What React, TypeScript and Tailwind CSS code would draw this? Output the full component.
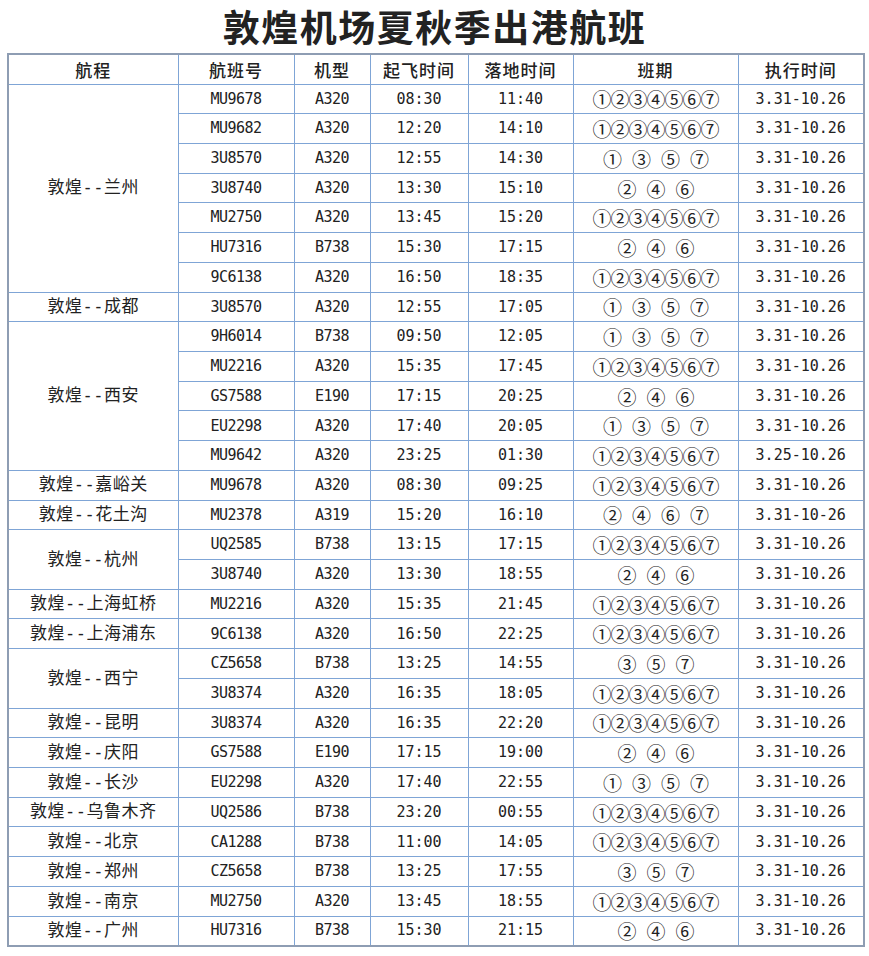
import React from 'react';

type Flight = {
  no: string;
  plane: string;
  dep: string;
  arr: string;
  days: string;
  period?: string;
};

type Route = { city: string; flights: Flight[] };

const FULL = '1234567';

const routes: Route[] = [
  {
    city: '兰州',
    flights: [
      { no: 'MU9678', plane: 'A320', dep: '08:30', arr: '11:40', days: FULL },
      { no: 'MU9682', plane: 'A320', dep: '12:20', arr: '14:10', days: FULL },
      { no: '3U8570', plane: 'A320', dep: '12:55', arr: '14:30', days: '1357' },
      { no: '3U8740', plane: 'A320', dep: '13:30', arr: '15:10', days: '246' },
      { no: 'MU2750', plane: 'A320', dep: '13:45', arr: '15:20', days: FULL },
      { no: 'HU7316', plane: 'B738', dep: '15:30', arr: '17:15', days: '246' },
      { no: '9C6138', plane: 'A320', dep: '16:50', arr: '18:35', days: FULL },
    ],
  },
  { city: '成都', flights: [{ no: '3U8570', plane: 'A320', dep: '12:55', arr: '17:05', days: '1357' }] },
  {
    city: '西安',
    flights: [
      { no: '9H6014', plane: 'B738', dep: '09:50', arr: '12:05', days: '1357' },
      { no: 'MU2216', plane: 'A320', dep: '15:35', arr: '17:45', days: FULL },
      { no: 'GS7588', plane: 'E190', dep: '17:15', arr: '20:25', days: '246' },
      { no: 'EU2298', plane: 'A320', dep: '17:40', arr: '20:05', days: '1357' },
      { no: 'MU9642', plane: 'A320', dep: '23:25', arr: '01:30', days: FULL, period: '3.25-10.26' },
    ],
  },
  { city: '嘉峪关', flights: [{ no: 'MU9678', plane: 'A320', dep: '08:30', arr: '09:25', days: FULL }] },
  { city: '花土沟', flights: [{ no: 'MU2378', plane: 'A319', dep: '15:20', arr: '16:10', days: '2467', period: '3.31-10-26' }] },
  {
    city: '杭州',
    flights: [
      { no: 'UQ2585', plane: 'B738', dep: '13:15', arr: '17:15', days: FULL },
      { no: '3U8740', plane: 'A320', dep: '13:30', arr: '18:55', days: '246' },
    ],
  },
  { city: '上海虹桥', flights: [{ no: 'MU2216', plane: 'A320', dep: '15:35', arr: '21:45', days: FULL }] },
  { city: '上海浦东', flights: [{ no: '9C6138', plane: 'A320', dep: '16:50', arr: '22:25', days: FULL }] },
  {
    city: '西宁',
    flights: [
      { no: 'CZ5658', plane: 'B738', dep: '13:25', arr: '14:55', days: '357' },
      { no: '3U8374', plane: 'A320', dep: '16:35', arr: '18:05', days: FULL },
    ],
  },
  { city: '昆明', flights: [{ no: '3U8374', plane: 'A320', dep: '16:35', arr: '22:20', days: FULL }] },
  { city: '庆阳', flights: [{ no: 'GS7588', plane: 'E190', dep: '17:15', arr: '19:00', days: '246' }] },
  { city: '长沙', flights: [{ no: 'EU2298', plane: 'A320', dep: '17:40', arr: '22:55', days: '1357' }] },
  { city: '乌鲁木齐', flights: [{ no: 'UQ2586', plane: 'B738', dep: '23:20', arr: '00:55', days: FULL }] },
  { city: '北京', flights: [{ no: 'CA1288', plane: 'B738', dep: '11:00', arr: '14:05', days: FULL }] },
  { city: '郑州', flights: [{ no: 'CZ5658', plane: 'B738', dep: '13:25', arr: '17:55', days: '357' }] },
  { city: '南京', flights: [{ no: 'MU2750', plane: 'A320', dep: '13:45', arr: '18:55', days: FULL }] },
  { city: '广州', flights: [{ no: 'HU7316', plane: 'B738', dep: '15:30', arr: '21:15', days: '246' }] },
];

const circled = ['①', '②', '③', '④', '⑤', '⑥', '⑦'];

const Days: React.FC<{ days: string }> = ({ days }) => {
  const full = days === FULL;
  return (
    <div className={`flex justify-center ${full ? 'gap-0' : 'gap-[11px]'}`}>
      {days.split('').map((d) => (
        <span key={d} className="w-[18px] text-center text-[19px] leading-none">
          {circled[Number(d) - 1]}
        </span>
      ))}
    </div>
  );
};

const cell = 'border border-[#7fa5d6] text-center align-middle p-0';
const mono = "[font-family:'DejaVu_Sans_Mono','Noto_Sans_CJK_SC',monospace] text-[15px]";

export default function App() {
  return (
    <div className="min-h-[956px] bg-white text-[#222] [font-family:'Noto_Sans_CJK_SC',sans-serif]">
      <h1 className="h-[53px] text-center text-[37px] font-bold leading-[53px] tracking-[1.5px]">
        敦煌机场夏秋季出港航班
      </h1>
      <table className="ml-[7px] w-[856px] table-fixed border-collapse border-2 border-[#8e9db3]">
        <colgroup>
          <col className="w-[170px]" />
          <col className="w-[116px]" />
          <col className="w-[76px]" />
          <col className="w-[98px]" />
          <col className="w-[105px]" />
          <col className="w-[165px]" />
          <col className="w-[126px]" />
        </colgroup>
        <thead>
          <tr className="h-[30px] text-[17px]">
            {['航程', '航班号', '机型', '起飞时间', '落地时间', '班期', '执行时间'].map((h) => (
              <th key={h} className={`${cell} font-medium tracking-[1px]`}>
                {h}
              </th>
            ))}
          </tr>
        </thead>
        <tbody>
          {routes.map((r) =>
            r.flights.map((f, i) => (
              <tr key={r.city + f.no} className="h-[29.72px]">
                {i === 0 && (
                  <td
                    rowSpan={r.flights.length}
                    className={`${cell} text-[17px] tracking-[0.5px] [font-family:'DejaVu_Sans_Mono','Noto_Sans_CJK_SC',monospace]`}
                  >
                    敦煌--{r.city}
                  </td>
                )}
                <td className={`${cell} ${mono} tracking-[-0.5px]`}>{f.no}</td>
                <td className={`${cell} ${mono} tracking-[-0.5px]`}>{f.plane}</td>
                <td className={`${cell} ${mono}`}>{f.dep}</td>
                <td className={`${cell} ${mono}`}>{f.arr}</td>
                <td className={cell}>
                  <Days days={f.days} />
                </td>
                <td className={`${cell} ${mono}`}>{f.period ?? '3.31-10.26'}</td>
              </tr>
            ))
          )}
        </tbody>
      </table>
    </div>
  );
}
